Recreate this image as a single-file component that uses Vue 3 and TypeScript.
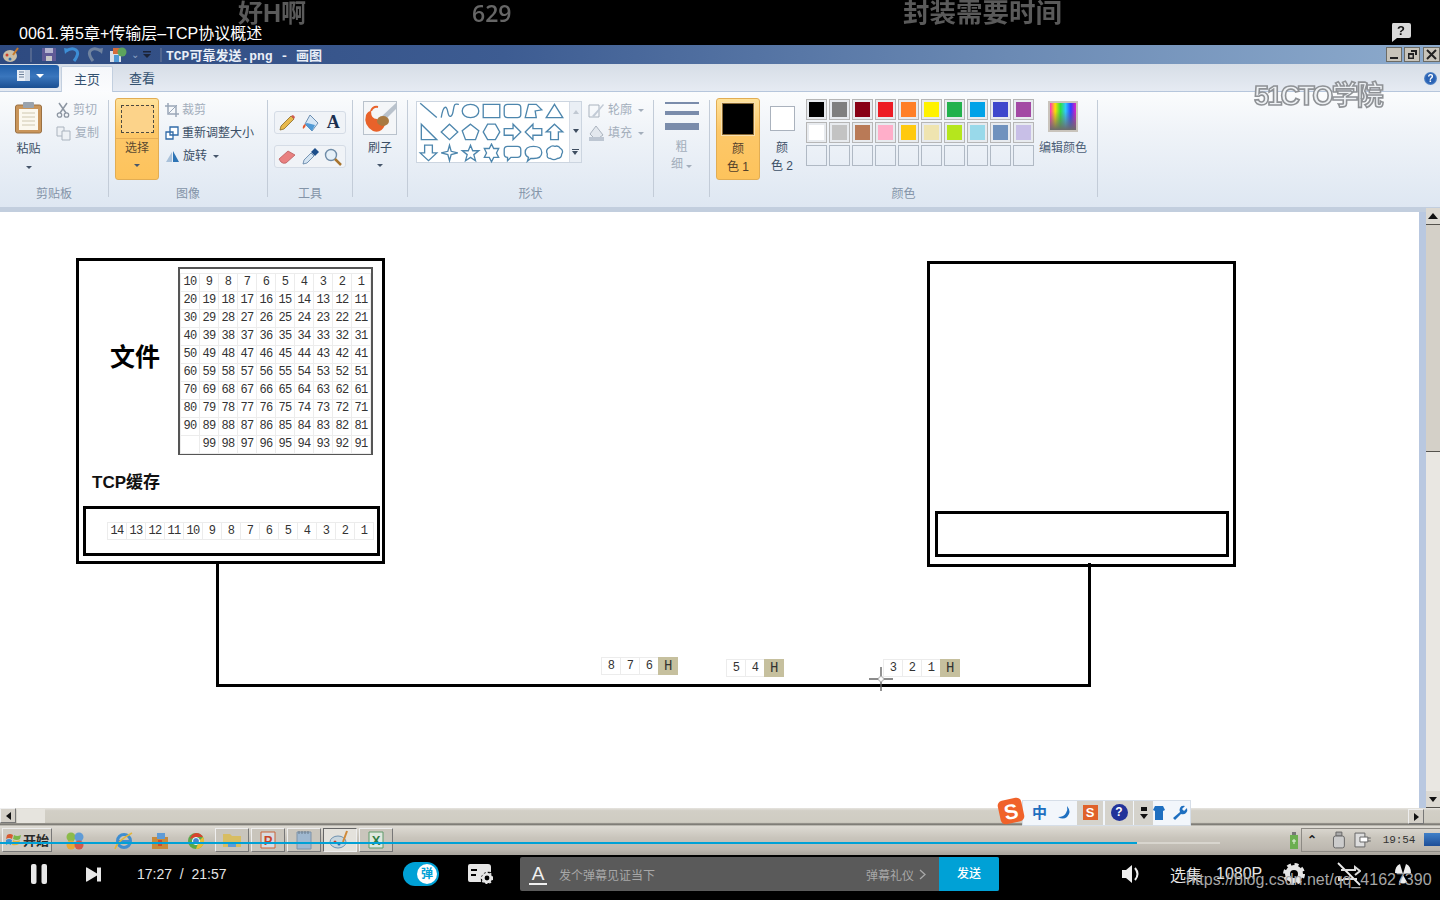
<script setup lang="ts">
const rowsOfFile: (number | string)[][] = []
for (let r = 0; r < 10; r++) {
  const row: (number | string)[] = []
  for (let c = 10; c >= 1; c--) {
    const v = r * 10 + c
    row.push(v === 100 ? '' : v)
  }
  rowsOfFile.push(row)
}
const fileCells = rowsOfFile.flat()
const bufferCells = [14, 13, 12, 11, 10, 9, 8, 7, 6, 5, 4, 3, 2, 1]

interface Packet {
  id: number
  x: number
  y: number
  nums: number[]
}
const packets: Packet[] = [
  { id: 1, x: 601, y: 445, nums: [8, 7, 6] },
  { id: 2, x: 726, y: 447, nums: [5, 4] },
  { id: 3, x: 883, y: 447, nums: [3, 2, 1] }
]

const shapes: string[] = [
  'M2 2L17 15',
  'M2 15C4 3 7 4 8 10S12 15 13 8S15 3 18 3',
  'M9.5 3C14 3 17 5.5 17 9S14 15 9.5 15S2 12.5 2 9S5 3 9.5 3Z',
  'M2 3H17V15H2Z',
  'M5 3H14Q17 3 17 6V12Q17 15 14 15H5Q2 15 2 12V6Q2 3 5 3Z',
  'M2 15L5 3H12L17 8L11 9L12 15Z',
  'M9.5 3L17 15H2Z',
  'M3 2L17 16H3Z',
  'M9.5 2L17 9L9.5 16L2 9Z',
  'M9.5 2L17 8L14 16H5L2 8Z',
  'M6 2H13L17 9L13 16H6L2 9Z',
  'M2 6H10V2L17 9L10 16V12H2Z',
  'M17 6H9V2L2 9L9 16V12H17Z',
  'M9.5 2L17 9H13V16H6V9H2Z',
  'M6 2H13V9H17L9.5 16L2 9H6Z',
  'M9.5 2L11 7.5L17 9L11 10.5L9.5 16L8 10.5L2 9L8 7.5Z',
  'M9.5 2L11.5 7H17L12.5 10.5L14 16L9.5 13L5 16L6.5 10.5L2 7H7.5Z',
  'M9.5 1L11.5 5H16L14 9L16 13H11.5L9.5 17L7.5 13H3L5 9L3 5H7.5Z',
  'M5 3H14Q17 3 17 6V10Q17 13 14 13H8L5 16V13Q2 13 2 10V6Q2 3 5 3Z',
  'M9.5 3C14 3 17 5 17 8.5S14 14 9.5 14Q8 14 7 14L4 16.500L5 13Q2 11.500 2 8.500C2 5 5 3 9.500 3Z',
  'M5 4Q7 2 10 3Q13 2 15 5Q18 7 16 10Q16 14 12 14Q9 16 6 14Q2 14 3 10Q1 6 5 4Z'
]

const colorRow1 = ['#000000', '#7f7f7f', '#880015', '#ed1c24', '#ff7f27', '#fff200', '#22b14c', '#00a2e8', '#3f48cc', '#a349a4']
const colorRow2 = ['#ffffff', '#c3c3c3', '#b97a57', '#ffaec9', '#ffc90e', '#efe4b0', '#b5e61d', '#99d9ea', '#7092be', '#c8bfe7']
const colorRow3 = Array<string>(10).fill('transparent')
const colorRows = [colorRow1, colorRow2, colorRow3]
</script>

<template>
  <div class="screen">
    <header class="top-bar">
      <span class="danmaku d1">好H啊</span>
      <span class="danmaku d2">629</span>
      <span class="danmaku d3">封装需要时间</span>
      <span class="video-title">0061.第5章+传输层–TCP协议概述</span>
      <svg class="help-bubble" width="22" height="21" viewBox="0 0 22 21">
        <path d="M3 1H19Q21 1 21 3V14Q21 16 19 16H7L2 20V3Q2 1 3 1Z" fill="#d9d9d9" />
        <text x="11" y="13" text-anchor="middle" font-size="13" font-weight="700" font-family="Liberation Sans, sans-serif" fill="#111">?</text>
      </svg>
    </header>

    <div class="title-bar">
      <svg class="qa" width="18" height="16" viewBox="0 0 18 16">
        <ellipse cx="8" cy="9" rx="7" ry="6" fill="#c9bfa8" />
        <circle cx="5" cy="8" r="1.500" fill="#d0402a" />
        <circle cx="8" cy="12" r="1.500" fill="#2d6fb0" />
        <path d="M11 8L16 1" stroke="#c77a2a" stroke-width="2" />
      </svg>
      <i class="sep"></i>
      <svg class="qa qa-save" width="16" height="15" viewBox="0 0 16 15">
        <path d="M1 1H15V14H1Z" fill="#5f5a96" />
        <path d="M4 1H12V6H4Z" fill="#b4b4d0" />
        <path d="M5 9H11V14H5Z" fill="#c8c8c8" />
      </svg>
      <svg class="qa qa-undo" width="18" height="15" viewBox="0 0 18 15">
        <path d="M3 4Q9 0 13 3T11 14" fill="none" stroke="#3d8ed6" stroke-width="3" />
        <path d="M1 1L7 2L2 7Z" fill="#3d8ed6" />
      </svg>
      <svg class="qa qa-redo" width="18" height="15" viewBox="0 0 18 15">
        <path d="M15 4Q9 0 5 3T7 14" fill="none" stroke="#70839f" stroke-width="3" />
        <path d="M17 1L11 2L16 7Z" fill="#70839f" />
      </svg>
      <svg class="qa qa-multi" width="22" height="16" viewBox="0 0 22 16">
        <path d="M1 4H12V15H1Z" fill="#d8dfe8" />
        <path d="M4 1H14V7H4Z" fill="#d66c3a" />
        <circle cx="13" cy="5" r="4.500" fill="#5da35d" />
        <path d="M5 8H10V15H5Z" fill="#4f9ad6" />
      </svg>
      <span class="qa-caret">⌄</span>
      <svg class="qa qa-more" width="10" height="8" viewBox="0 0 10 8">
        <path d="M1 0H9V1.500H1Z M1 3H9L5 7Z" fill="#1c2438" />
      </svg>
      <i class="sep sep2"></i>
      <span class="window-title">TCP可靠发送.png - 画图</span>
      <div class="win-btns">
        <span class="win-btn"><i class="win-min"></i></span>
        <span class="win-btn"><svg width="11" height="11" viewBox="0 0 11 11"><path d="M4 1H10V6H8V3H4Z M1 4H7V10H1Z M2.500 6V8.500H5.500V6Z" fill="#222" fill-rule="evenodd" /></svg></span>
        <span class="win-btn win-close"><svg width="11" height="11" viewBox="0 0 11 11"><path d="M1 1L10 10M10 1L1 10" stroke="#222" stroke-width="2" /></svg></span>
      </div>
    </div>

    <div class="tab-row">
      <div class="file-tab">
        <svg width="15" height="11" viewBox="0 0 15 11">
          <path d="M1 0H14V11H1Z" fill="#e8eef6" />
          <path d="M3 2H8M3 4.500H8M3 7H8" stroke="#6b7f99" />
          <path d="M9 0H14V11H9Z" fill="#cfdae8" />
        </svg>
        <i class="mini-caret white"></i>
      </div>
      <div class="tab active">主页</div>
      <div class="tab">查看</div>
      <span class="logo-51">51CTO学院</span>
      <span class="help-ball">?</span>
    </div>

    <div class="ribbon">
      <section class="group g-clip">
        <div class="group-body">
          <div class="big-btn paste">
            <svg width="29" height="33" viewBox="0 0 29 33">
              <rect x="1.500" y="4" width="26" height="28" rx="2" fill="#c9955a" stroke="#9a7042" />
              <rect x="5" y="8" width="19" height="21" fill="#fbf8ef" />
              <path d="M8 12H21M8 16H21M8 20H21M8 24H21" stroke="#cfc8b0" />
              <rect x="9" y="1" width="11" height="6" rx="1" fill="#9aa3ad" />
            </svg>
            <span>粘贴</span>
            <i class="mini-caret"></i>
          </div>
          <div class="small-col muted">
            <div class="small-row">
              <svg width="14" height="16" viewBox="0 0 14 16"><path d="M3 1L10 11M11 1L4 11" stroke="#8d96a2" stroke-width="1.500" /><circle cx="3.500" cy="13" r="2.200" fill="none" stroke="#8d96a2" stroke-width="1.300" /><circle cx="10.500" cy="13" r="2.200" fill="none" stroke="#8d96a2" stroke-width="1.300" /></svg>
              <span>剪切</span>
            </div>
            <div class="small-row">
              <svg width="16" height="15" viewBox="0 0 16 15"><path d="M1 1H8V10H1Z" fill="#eef1f5" stroke="#aab3be" /><path d="M6 5H14V14H6Z" fill="#eef1f5" stroke="#aab3be" /></svg>
              <span>复制</span>
            </div>
          </div>
        </div>
        <div class="group-label">剪贴板</div>
      </section>

      <section class="group g-image">
        <div class="group-body">
          <div class="orange-btn select-btn">
            <div class="select-top"><i class="dashed"></i></div>
            <span>选择</span>
            <i class="mini-caret"></i>
          </div>
          <div class="small-col">
            <div class="small-row muted">
              <svg width="14" height="14" viewBox="0 0 14 14"><path d="M3 0V11H14M0 3H11V14" fill="none" stroke="#9aa7b8" stroke-width="1.500" /><path d="M4 10L12 2" stroke="#9aa7b8" /></svg>
              <span>裁剪</span>
            </div>
            <div class="small-row">
              <svg width="14" height="14" viewBox="0 0 14 14"><path d="M5 1H13V9H5Z M1 6H8V13H1Z" fill="#fff" stroke="#2f6aa8" stroke-width="1.300" /></svg>
              <span>重新调整大小</span>
            </div>
            <div class="small-row">
              <svg width="15" height="13" viewBox="0 0 15 13"><path d="M1 12L7 2V12Z" fill="#a9c1da" /><path d="M8 1L14 12H8Z" fill="#2e74b5" /></svg>
              <span>旋转</span><i class="mini-caret inline"></i>
            </div>
          </div>
        </div>
        <div class="group-label">图像</div>
      </section>

      <section class="group g-tools">
        <div class="group-body tools-body">
          <div class="tool-strip">
            <span><svg width="20" height="20" viewBox="0 0 20 20"><path d="M3 17L4 13L14 3L17 6L7 16Z" fill="#e8b94c" stroke="#8a6a24" stroke-width=".8" /><path d="M14 3L17 6L18 4L16 2Z" fill="#d05a50" /></svg></span>
            <span><svg width="20" height="20" viewBox="0 0 20 20"><path d="M10 2L18 10L12 18L5 11Z" fill="#d6e6f5" stroke="#6d8fb2" /><path d="M5 11Q2 13 3 16Q6 14 6 11Z" fill="#e5562a" /><path d="M7 10L15 12L12 18L5 11Z" fill="#4f9ad6" /></svg></span>
            <span class="a-glyph">A</span>
          </div>
          <div class="tool-strip">
            <span><svg width="20" height="20" viewBox="0 0 20 20"><path d="M2 12L11 4L18 8L9 16Q6 17 4 15Z" fill="#e98080" stroke="#b85c5c" stroke-width=".8" /></svg></span>
            <span><svg width="20" height="20" viewBox="0 0 20 20"><path d="M3 17L4 13L11 6L14 9L7 16Z" fill="#d4e4f2" stroke="#5b7ea2" stroke-width=".8" /><path d="M11 5L15 1L19 5L15 9Z" fill="#1d4e8a" /></svg></span>
            <span><svg width="20" height="20" viewBox="0 0 20 20"><circle cx="8" cy="8" r="5.500" fill="#e6f0f8" stroke="#6f8ca8" stroke-width="1.400" /><path d="M12 12L18 18" stroke="#a8742e" stroke-width="2.500" /></svg></span>
          </div>
        </div>
        <div class="group-label">工具</div>
      </section>

      <section class="group g-brush">
        <div class="group-body column">
          <svg class="brush-icon" width="34" height="34" viewBox="0 0 34 34">
            <rect x=".5" y=".5" width="33" height="33" fill="#f4f6f8" stroke="#b9c2cc" />
            <path d="M33 2L18 16L21 20L33 8Z" fill="#b9c2cc" />
            <path d="M3 14Q0 24 10 30Q18 33 22 24L14 18Q8 18 8 10Q5 10 3 14Z" fill="#e8622a" />
            <path d="M8 10Q10 5 15 6" fill="none" stroke="#e8622a" stroke-width="2" />
            <ellipse cx="20" cy="20" rx="6" ry="5" fill="#a87a42" />
          </svg>
          <span class="brush-label">刷子</span>
          <i class="mini-caret"></i>
        </div>
        <div class="group-label">&nbsp;</div>
      </section>

      <section class="group g-shapes">
        <div class="group-body">
          <div class="gallery">
            <div class="gallery-cells">
              <svg v-for="(d, i) in shapes" :key="i" width="21" height="21" viewBox="0 0 19 19">
                <path :d="d" fill="none" stroke="#4d86ad" stroke-width="1.200" />
              </svg>
            </div>
            <div class="gallery-scroll">
              <i class="tri-up"></i>
              <i class="tri-down"></i>
              <i class="tri-more"></i>
            </div>
          </div>
          <div class="small-col muted outline-col">
            <div class="small-row">
              <svg width="17" height="17" viewBox="0 0 17 17"><path d="M1 3H11V15H1Z" fill="none" stroke="#aab3be" /><path d="M4 14L15 2L16 3L6 15Z" fill="#c2cbd6" /></svg>
              <span>轮廓</span><i class="mini-caret inline light"></i>
            </div>
            <div class="small-row">
              <svg width="17" height="17" viewBox="0 0 17 17"><path d="M8 1L15 10L8 15L2 9Z" fill="#e3e8ee" stroke="#aab3be" /><path d="M1 12H16V16H1Z" fill="#bdc6d2" /></svg>
              <span>填充</span><i class="mini-caret inline light"></i>
            </div>
          </div>
        </div>
        <div class="group-label">形状</div>
      </section>

      <section class="group g-size">
        <div class="group-body column">
          <div class="size-lines"><i class="l1"></i><i class="l2"></i><i class="l3"></i></div>
          <span class="size-label muted">粗</span>
          <span class="size-label muted">细<i class="mini-caret inline light"></i></span>
        </div>
        <div class="group-label">&nbsp;</div>
      </section>

      <section class="group g-colors">
        <div class="group-body">
          <div class="orange-btn color-btn">
            <i class="color-big"></i>
            <span>颜</span>
            <span>色 1</span>
          </div>
          <div class="color2-btn">
            <i class="color-small"></i>
            <span>颜</span>
            <span>色 2</span>
          </div>
          <div class="swatches">
            <div v-for="(row, r) in colorRows" :key="r" class="swatch-row">
              <span v-for="(c, i) in row" :key="i" class="swatch" :class="{ empty: r === 2 }"><i :style="{ background: c }"></i></span>
            </div>
          </div>
          <div class="edit-colors">
            <i class="rainbow"></i>
            <span>编辑颜色</span>
          </div>
        </div>
        <div class="group-label">颜色</div>
      </section>
      <section class="group g-rest"></section>
    </div>

    <div class="work-row">
      <main class="canvas">
        <div class="box left-box">
          <div class="file-label">文件</div>
          <div class="file-grid">
            <span v-for="(n, i) in fileCells" :key="i" class="cell">{{ n }}</span>
          </div>
          <div class="buffer-label">TCP缓存</div>
          <div class="inner-box left-inner">
            <div class="buffer-row">
              <span v-for="n in bufferCells" :key="n" class="cell buf">{{ n }}</span>
            </div>
          </div>
        </div>

        <div class="box right-box">
          <div class="inner-box right-inner"></div>
        </div>

        <div class="wire"></div>

        <div v-for="p in packets" :key="p.id" class="packet" :style="{ left: p.x + 'px', top: p.y + 'px' }">
          <span v-for="n in p.nums" :key="n" class="cell pk">{{ n }}</span>
          <span class="cell head">H</span>
        </div>

        <svg class="cursor" width="24" height="24" viewBox="0 0 24 24">
          <path d="M12 0V9M12 15V24M0 12H9M15 12H24" stroke="#666" stroke-width="1.400" />
          <circle cx="12" cy="12" r="2.500" fill="none" stroke="#aaa" />
        </svg>
      </main>
      <div class="blue-strip"></div>
      <aside class="v-scroll">
        <div class="v-btn"><i class="tri-up dark"></i></div>
        <div class="v-thumb"></div>
        <div class="v-track"></div>
        <div class="v-btn"><i class="tri-down dark"></i></div>
      </aside>
    </div>

    <div class="h-scroll">
      <div class="h-btn"><i class="tri-left"></i></div>
      <div class="h-track"></div>
      <div class="h-thumb"></div>
      <div class="h-btn end"><i class="tri-right"></i></div>
    </div>

    <div class="ime">
      <svg class="ime-logo" width="30" height="30" viewBox="0 0 30 30">
        <rect x="3" y="3" width="24" height="24" rx="5" transform="rotate(-12 15 15)" fill="#f0622a" />
        <text x="15" y="23" text-anchor="middle" font-size="21" font-weight="700" font-family="Liberation Sans, sans-serif" fill="#fff" transform="rotate(-12 15 15)">S</text>
      </svg>
      <div class="ime-bar">
        <span class="ime-zh">中</span>
        <svg class="ime-moon" width="16" height="16" viewBox="0 0 16 16"><path d="M10 1Q15 7 10 12Q6 15 1 12Q7 12 9 8Q11 5 10 1Z" fill="#1e6fc0" /></svg>
        <span class="ime-cell"><b class="ime-s">S</b></span>
        <span class="ime-cell wide"><b class="ime-q">?</b></span>
        <span class="ime-grip"><i class="dots"></i><i class="tri-down dark"></i></span>
        <svg width="12" height="16" viewBox="0 0 12 16"><path d="M2 1H10L12 5L10 6V15H2V6L0 5Z" fill="#1e6fc0" /></svg>
        <svg class="ime-wrench" width="16" height="16" viewBox="0 0 16 16"><path d="M15 3L12 6L10 4L13 1Q9 0 8 3Q7 5 8 7L1 13L3 15L9 9Q12 10 14 8Q16 6 15 3Z" fill="#1e6fc0" /></svg>
      </div>
    </div>

    <div class="taskbar">
      <div class="start-btn">
        <svg width="15" height="15" viewBox="0 0 15 15">
          <path d="M1 3Q4 1 7 3L6 7Q3 5 0 7Z" fill="#d85a30" />
          <path d="M8 3Q11 5 15 3L14 7Q11 9 7 7Z" fill="#7ab648" />
          <path d="M0 8Q3 6 6 8L5 13Q2 11 0 13Z" fill="#3f8ed0" />
          <path d="M7 8Q10 10 14 8L13 12Q10 14 6 13Z" fill="#e2b63c" />
        </svg>
        <span>开始</span>
      </div>
      <div class="task-quick">
        <svg width="20" height="20" viewBox="0 0 20 20"><circle cx="6" cy="6" r="4.500" fill="#8cbb4a" /><circle cx="14" cy="6" r="4.500" fill="#5f9bd6" /><circle cx="6" cy="14" r="4.500" fill="#e8a83a" /><circle cx="14" cy="14" r="4.500" fill="#d45a4a" /></svg>
        <svg class="tq-ie" width="20" height="20" viewBox="0 0 20 20"><circle cx="10" cy="10" r="6.500" fill="none" stroke="#3f8ed0" stroke-width="3" /><path d="M4 10H16" stroke="#3f8ed0" stroke-width="2" /><path d="M1 18Q3 10 18 2" fill="none" stroke="#e2b63c" stroke-width="1.500" /></svg>
        <svg class="tq-box" width="18" height="18" viewBox="0 0 18 18"><path d="M1 5H17V17H1Z" fill="#c88a3a" /><path d="M6 1H14V7H6Z" fill="#5f9bd6" /><path d="M7 8H11V14H7Z" fill="#d04a2a" /></svg>
        <svg class="tq-chrome" width="18" height="18" viewBox="0 0 18 18"><circle cx="9" cy="9" r="8" fill="#5aa84a" /><path d="M9 1A8 8 0 0 1 16 5H9L3 7A8 8 0 0 1 9 1Z" fill="#d8432e" /><path d="M16 5A8 8 0 0 1 9 17L12 9Z" fill="#e8bf3a" /><circle cx="9" cy="9" r="3.500" fill="#4a86d0" stroke="#fff" /></svg>
      </div>
      <div class="task-items">
        <span class="task-item"><svg width="20" height="18" viewBox="0 0 20 18"><path d="M1 3H8L10 5H19V16H1Z" fill="#d8bd62" /><path d="M6 11H14V16H6Z" fill="#5f9bd6" /></svg></span>
        <span class="task-item"><svg width="18" height="18" viewBox="0 0 18 18"><path d="M2 1H16V17H2Z" fill="#d8dde2" stroke="#c9653a" /><text x="9" y="14" text-anchor="middle" font-size="13" font-weight="700" font-family="Liberation Sans, sans-serif" fill="#c9452a">P</text></svg></span>
        <span class="task-item"><svg width="18" height="20" viewBox="0 0 18 20"><path d="M2 2H16V19H2Z" fill="#9fb8d0" stroke="#7e93a8" /><path d="M4 1V4M7 1V4M10 1V4M13 1V4" stroke="#6a7a8a" /></svg></span>
        <span class="task-item current"><svg width="22" height="20" viewBox="0 0 22 20"><ellipse cx="9" cy="12" rx="8" ry="6" fill="#c8d6de" stroke="#6f92b0" /><circle cx="6" cy="12" r="1.500" fill="#d0402a" /><circle cx="10" cy="14" r="1.500" fill="#2d6fb0" /><path d="M14 12L18 1" stroke="#d08a3a" stroke-width="2" /></svg></span>
        <span class="task-item"><svg width="18" height="18" viewBox="0 0 18 18"><path d="M2 1H16V17H2Z" fill="#dfe8df" stroke="#5f9a6a" /><text x="9" y="14" text-anchor="middle" font-size="13" font-weight="700" font-family="Liberation Sans, sans-serif" fill="#2e7d44">X</text></svg></span>
      </div>
      <div class="tray">
        <svg class="tray-batt" width="10" height="18" viewBox="0 0 10 18"><path d="M1 3H9V17H1Z" fill="#6cae50" /><path d="M3 0H7V3H3Z" fill="#777" /><path d="M3 9H7M5 7V12" stroke="#e6f4e0" /></svg>
        <div class="tray-box">
          <span class="tray-up">⌃</span>
          <svg class="tray-usb" width="14" height="18" viewBox="0 0 14 18"><path d="M4 1H10V5H4Z" fill="#aaa" stroke="#666" /><rect x="1.500" y="5" width="11" height="12" rx="2" fill="#ccc" stroke="#666" /></svg>
          <svg class="tray-plug" width="18" height="18" viewBox="0 0 18 18"><path d="M1 2H11V16H1Z" fill="#ddd" stroke="#666" /><path d="M6 6H14V11H6Z" fill="#fff" stroke="#666" /><path d="M14 7H17M14 10H17" stroke="#666" /></svg>
          <span class="clock">19:54</span>
          <i class="desk"></i>
        </div>
      </div>
    </div>

    <div class="player">
      <div class="progress"><i class="buffered"></i><i class="played"></i></div>
      <svg class="p-pause" width="16" height="20" viewBox="0 0 16 20"><rect x="0" y="0" width="5.500" height="20" rx="2" fill="#e8e8e8" /><rect x="10.500" y="0" width="5.500" height="20" rx="2" fill="#e8e8e8" /></svg>
      <svg class="p-next" width="17" height="15" viewBox="0 0 17 15"><path d="M1 1Q1 0 2 .5L12 6.500V.5H16V14.500H12V8.500L2 14.500Q1 15 1 14Z" fill="#e8e8e8" /></svg>
      <span class="p-time">17:27&nbsp; /&nbsp; 21:57</span>
      <div class="p-toggle"><b>弹</b></div>
      <svg class="p-setting" width="25" height="20" viewBox="0 0 25 20">
        <path d="M2 0H20Q23 0 23 3V8Q17 7 14 11Q12 14 13 18H2Q0 18 0 16V2Q0 0 2 0Z" fill="#e6e6e6" />
        <path d="M3 6H9M3 11H8" stroke="#000" stroke-width="1.800" />
        <circle cx="19" cy="14" r="3.800" fill="none" stroke="#e6e6e6" stroke-width="2.800" />
        <circle cx="19" cy="14" r="5.500" fill="none" stroke="#e6e6e6" stroke-width="1.500" stroke-dasharray="2 2" />
      </svg>
      <div class="p-input">
        <span class="p-a">A</span>
        <span class="p-hint">发个弹幕见证当下</span>
        <span class="p-gift">弹幕礼仪</span>
        <svg width="7" height="11" viewBox="0 0 7 11"><path d="M1 1L6 5.500L1 10" fill="none" stroke="#a8a8a8" stroke-width="1.300" /></svg>
        <span class="p-send">发送</span>
      </div>
      <svg class="p-vol" width="22" height="20" viewBox="0 0 22 20"><path d="M1 6H5L11 1V19L5 14H1Z" fill="#eee" /><path d="M14 4Q19 10 14 16" fill="none" stroke="#eee" stroke-width="2" /></svg>
      <span class="p-text p-sel">选集</span>
      <span class="p-text p-res">1080P</span>
      <svg class="p-gear" width="22" height="22" viewBox="0 0 22 22">
        <circle cx="11" cy="11" r="6.500" fill="none" stroke="#e6e6e6" stroke-width="5" />
        <circle cx="11" cy="11" r="9.500" fill="none" stroke="#e6e6e6" stroke-width="3" stroke-dasharray="4 3.500" />
      </svg>
      <svg class="p-loop" width="24" height="24" viewBox="0 0 24 24">
        <path d="M1 1L23 23" stroke="#eee" stroke-width="1.800" />
        <path d="M4 8H18V5L23 9L18 13" fill="none" stroke="#ddd" stroke-width="2" />
        <path d="M20 17H6" stroke="#ddd" stroke-width="2" />
        <path d="M2 14V18H6" fill="none" stroke="#ddd" stroke-width="2" />
      </svg>
      <svg class="p-nuke" width="24" height="24" viewBox="0 0 24 24">
        <path d="M12 12L4 11Q4 4 9 2Z M12 12L20 11Q20 4 15 2Z M12 13L8 20Q12 23 16 20Z" fill="#eee" />
      </svg>
      <span class="watermark">https://blog.csdn.net/qq_41627390</span>
    </div>
  </div>
</template>

<style>
html,
body {
  margin: 0;
  background: #000;
}
</style>

<style scoped>
.screen {
  position: relative;
  width: 1440px;
  height: 900px;
  overflow: hidden;
  display: flex;
  flex-direction: column;
  font-family: 'Liberation Sans', 'Noto Sans CJK SC', sans-serif;
  filter: blur(0.45px);
}

i {
  display: block;
  font-style: normal;
}

/* top band of the video */
.top-bar {
  position: relative;
  height: 45px;
  flex: none;
  background: #000;
  box-sizing: border-box;
  padding: 24px 0 0 19px;
}
.video-title {
  display: block;
  color: #fff;
  font-size: 16px;
  line-height: 20px;
}
.danmaku {
  position: absolute;
  top: 0;
  color: #5a5a5a;
  font-size: 24px;
  line-height: 26px;
  font-weight: 700;
}
.d1 { left: 238px; font-size: 25px; }
.d2 { left: 472px; font-family: 'Open Sans', sans-serif; font-size: 23px; font-weight: 600; color: #666; }
.d3 { left: 903px; font-size: 26.5px; }
.help-bubble {
  position: absolute;
  left: 1390px;
  top: 22px;
}

/* title bar */
.title-bar {
  height: 19px;
  flex: none;
  display: flex;
  align-items: center;
  background: linear-gradient(90deg, #2e4a80 0%, #3d5c92 35%, #6b8ab4 70%, #8dabcd 100%);
  padding-left: 2px;
  box-sizing: border-box;
}
.qa { flex: none; }
.sep {
  width: 2px;
  height: 14px;
  margin: 0 0 0 10px;
  background: #51668f;
}
.qa-save { margin-left: 9px; }
.qa-undo { margin-left: 6px; }
.qa-redo { margin-left: 5px; }
.qa-multi { margin-left: 5px; }
.qa-caret {
  color: #8fa3c4;
  font-size: 10px;
  line-height: 10px;
}
.qa-more { margin-left: 3px; }
.sep2 { margin-left: 8px; }
.window-title {
  margin-left: 4px;
  color: #e9eef7;
  font-family: 'Liberation Mono', 'Noto Sans CJK SC', monospace;
  font-size: 13px;
  font-weight: 700;
  white-space: nowrap;
}
.win-btns {
  margin-left: auto;
  display: flex;
  gap: 2px;
}
.win-btn {
  width: 16px;
  height: 15px;
  background: #c8c4ba;
  border: 1px solid #6c6c66;
  box-sizing: border-box;
  display: flex;
  align-items: center;
  justify-content: center;
}
.win-close { width: 17px; margin-left: 1px; }
.win-min {
  width: 8px;
  height: 2px;
  background: #222;
  margin-top: 7px;
}

/* tabs */
.tab-row {
  position: relative;
  height: 28px;
  flex: none;
  display: flex;
  align-items: flex-end;
  background: linear-gradient(#d6dde6, #e6ebf3);
  border-bottom: 1px solid #b6c6dc;
  box-sizing: border-box;
}
.file-tab {
  width: 59px;
  height: 23px;
  margin-bottom: 3px;
  border-radius: 0 3px 3px 0;
  background: linear-gradient(#1e5da8, #3a76bd 50%, #1a4f92);
  display: flex;
  align-items: center;
  justify-content: center;
  gap: 5px;
  padding-bottom: 2px;
  box-sizing: border-box;
}
.tab {
  width: 52px;
  height: 24px;
  text-align: center;
  font-size: 13px;
  line-height: 23px;
  color: #33516f;
  box-sizing: border-box;
}
.tab.active {
  height: 26px;
  margin-bottom: -1px;
  background: linear-gradient(#f5f7fa, #fbfcfe);
  border: 1px solid #c2cfdf;
  border-bottom: 0;
  border-radius: 2px 2px 0 0;
  margin-left: 2px;
  line-height: 25px;
}
.tab:not(.active) { margin-left: 3px; }
.logo-51 {
  position: absolute;
  left: 1254px;
  top: 15px;
  font-size: 27px;
  line-height: 34px;
  font-weight: 700;
  color: #eef1f4;
  -webkit-text-stroke: 1.6px #8f9296;
  letter-spacing: -1.8px;
  white-space: nowrap;
}
.help-ball {
  position: absolute;
  left: 1424px;
  top: 8px;
  width: 13px;
  height: 13px;
  border-radius: 50%;
  background: radial-gradient(#2a62b4 50%, #9fc2e6);
  color: #fff;
  font-size: 10px;
  font-weight: 700;
  line-height: 13px;
  text-align: center;
}

/* ribbon */
.ribbon {
  height: 115px;
  flex: none;
  display: flex;
  background: linear-gradient(#fbfcfd 0%, #eff3f8 35%, #dee7f2 100%);
  font-size: 12px;
  color: #3b4f66;
}
.group {
  flex: none;
  box-sizing: border-box;
  border-right: 1px solid #c3ccd8;
  margin-top: 8px;
  height: 97px;
  display: flex;
  flex-direction: column;
}
.group-body {
  height: 82px;
  margin-top: -2px;
  display: flex;
}
.group-body.column {
  flex-direction: column;
  align-items: center;
}
.group-label {
  margin-top: auto;
  margin-bottom: -6px;
  text-align: center;
  font-size: 12px;
  line-height: 17px;
  color: #8494a8;
}
.g-clip { width: 109px; }
.g-image { width: 159px; }
.g-tools { width: 85px; }
.g-brush { width: 55px; }
.g-shapes { width: 246px; }
.g-size { width: 56px; }
.g-colors { width: 388px; }
.g-rest { border-right: 0; flex: 1; }

.big-btn.paste {
  width: 29px;
  margin-left: 14px;
  display: flex;
  flex-direction: column;
  align-items: center;
  padding-top: 3px;
}
.paste span {
  margin-top: 7px;
  line-height: 17px;
}
.paste .mini-caret { margin-top: 8px; }
.small-col {
  display: flex;
  flex-direction: column;
  gap: 5px;
  margin-top: 2px;
}
.g-clip .small-col {
  margin-left: 13px;
  margin-top: 3px;
}
.small-row {
  height: 18px;
  display: flex;
  align-items: center;
  gap: 3px;
  white-space: nowrap;
  line-height: 18px;
}
.muted { color: #a3aebb; }
.mini-caret {
  width: 0;
  height: 0;
  border: 3px solid transparent;
  border-top: 3px solid #46566b;
  border-bottom: 0;
}
.mini-caret.white { border-top-color: #fff; border-left-width: 4px; border-right-width: 4px; border-top-width: 4px; }
.mini-caret.inline { margin-left: 3px; display: inline-block; }
.mini-caret.light { border-top-color: #a3aebb; }

.orange-btn {
  box-sizing: border-box;
  background: linear-gradient(#ffe29a, #fdc869 40%, #fdc35c);
  border: 1px solid #e2ad53;
  border-radius: 3px;
}
.select-btn {
  width: 44px;
  height: 82px;
  margin-left: 6px;
  display: flex;
  flex-direction: column;
  align-items: center;
  color: #5a4a30;
}
.select-top {
  width: 100%;
  height: 40px;
  border-bottom: 1px solid #e6ae58;
  display: flex;
  justify-content: center;
  align-items: center;
  box-sizing: border-box;
}
.dashed {
  width: 31px;
  height: 26px;
  border: 1px dashed #4c4a40;
  background: #fcd38a;
}
.select-btn span { line-height: 18px; }
.select-btn .mini-caret { margin-top: 7px; }
.g-image .small-col { margin-left: 6px; margin-top: 3px; }

.tools-body {
  flex-direction: column;
  gap: 11px;
  padding: 13px 0 0 6px;
  box-sizing: border-box;
}
.tool-strip {
  width: 72px;
  height: 23px;
  display: flex;
  border: 1px solid #d5dce6;
  border-radius: 3px;
  background: #f0f3f7;
  box-sizing: border-box;
}
.tool-strip span {
  flex: 1;
  display: flex;
  align-items: center;
  justify-content: center;
}
.a-glyph {
  font-family: 'Liberation Serif', serif;
  font-size: 18px;
  font-weight: 700;
  color: #1b2f4f;
}
.brush-icon { margin-top: 3px; }
.brush-label { margin-top: 4px; line-height: 18px; }
.g-brush .mini-caret { margin-top: 7px; }

.gallery {
  margin: 3px 0 0 8px;
  width: 166px;
  height: 62px;
  display: flex;
  border: 1px solid #ccd5e0;
  box-sizing: border-box;
  background: #fff;
}
.gallery-cells {
  width: 152px;
  height: 63px;
  margin-top: -1px;
  display: flex;
  flex-wrap: wrap;
  align-content: flex-start;
  padding-left: 1px;
  box-sizing: border-box;
}
.gallery-scroll {
  flex: 1;
  background: #eaeff5;
  border-left: 1px solid #d5dce6;
  display: flex;
  flex-direction: column;
  align-items: center;
  justify-content: space-around;
}
.tri-up,
.tri-down {
  width: 0;
  height: 0;
  border: 3px solid transparent;
}
.tri-up { border-bottom: 4px solid #c0c8d2; border-top: 0; }
.tri-down { border-top: 4px solid #3e4d60; border-bottom: 0; }
.tri-up.dark { border-bottom-color: #111; border-left-width: 5px; border-right-width: 5px; border-bottom-width: 6px; }
.tri-down.dark { border-top-color: #111; border-left-width: 4px; border-right-width: 4px; border-top-width: 5px; }
.tri-more {
  width: 7px;
  height: 4px;
  border-top: 1px solid #3e4d60;
  position: relative;
}
.tri-more::after {
  content: '';
  position: absolute;
  left: 0;
  top: 1px;
  border: 3.5px solid transparent;
  border-top: 4px solid #3e4d60;
  border-bottom: 0;
}
.outline-col { margin: 3px 0 0 6px; gap: 5px; }

.size-lines {
  margin-top: 4px;
  width: 34px;
  display: flex;
  flex-direction: column;
}
.size-lines i { background: #7a8cab; }
.size-lines .l1 { height: 2px; margin-bottom: 7px; }
.size-lines .l2 { height: 4px; margin-bottom: 8px; }
.size-lines .l3 { height: 7px; }
.size-label { line-height: 17px; }
.size-lines + .size-label { margin-top: 9px; }

.color-btn {
  width: 44px;
  height: 82px;
  margin-left: 6px;
  display: flex;
  flex-direction: column;
  align-items: center;
  color: #53402a;
  line-height: 18px;
}
.color-big {
  width: 32px;
  height: 32px;
  margin: 4px 0 5px;
  background: #000;
  border: 1px solid #8a6a34;
  box-sizing: border-box;
  outline: 1px solid #f8e0b0;
}
.color2-btn {
  width: 44px;
  height: 82px;
  display: flex;
  flex-direction: column;
  align-items: center;
  line-height: 18px;
}
.color-small {
  width: 25px;
  height: 25px;
  margin: 8px 0 8px;
  background: #fff;
  border: 1px solid #aab2bd;
  box-sizing: border-box;
}
.swatches {
  margin: 1px 0 0 2px;
  display: flex;
  flex-direction: column;
  gap: 2px;
}
.swatch-row {
  display: flex;
  gap: 2px;
}
.swatch {
  width: 21px;
  height: 21px;
  box-sizing: border-box;
  border: 1px solid #b6b6b6;
  background: #e8ebef;
  padding: 2px;
}
.swatch i { width: 100%; height: 100%; }
.swatch.empty { border-color: #b0b9c4; background: transparent; }
.edit-colors {
  margin-left: 2px;
  display: flex;
  flex-direction: column;
  align-items: center;
  width: 54px;
  white-space: nowrap;
  color: #4b5e76;
}
.rainbow {
  width: 30px;
  height: 31px;
  margin: 3px 0 6px;
  border: 2px solid #c9c4bc;
  box-sizing: border-box;
  background: linear-gradient(transparent 30%, #6b6b6b 100%), linear-gradient(90deg, #ff30c0, #ffe000, #30e040, #30c8ff, #3040ff, #e020c0);
}

/* work area */
.work-row {
  height: 601px;
  flex: none;
  display: flex;
  background: #fff;
  border-top: 5px solid #c2cede;
  box-sizing: border-box;
}
.canvas {
  position: relative;
  width: 1419px;
  flex: none;
  background: #fff;
  height: 596px;
}
.blue-strip {
  width: 7px;
  background: #b9c8e0;
  flex: none;
}
.v-scroll {
  flex: 1;
  display: flex;
  flex-direction: column;
  margin-top: -4px;
  background: #e6e3dd;
}
.v-btn {
  height: 16px;
  flex: none;
  background: #dcd9d2;
  border-bottom: 1px solid #55534e;
  display: flex;
  align-items: center;
  justify-content: center;
}
.v-thumb {
  height: 226px;
  flex: none;
  background: #d4d0c8;
  border-bottom: 1px solid #55534e;
}
.v-track { flex: 1; background: #e9e7e2; }

.box {
  position: absolute;
  box-sizing: border-box;
  border: 3px solid #000;
  background: #fff;
}
.left-box {
  left: 76px;
  top: 46px;
  width: 309px;
  height: 306px;
}
.right-box {
  left: 927px;
  top: 49px;
  width: 309px;
  height: 306px;
}
.inner-box {
  position: absolute;
  box-sizing: border-box;
  border: 3px solid #000;
  background: #fff;
}
.left-inner {
  left: 4px;
  top: 245px;
  width: 297px;
  height: 50px;
}
.right-inner {
  left: 5px;
  top: 247px;
  width: 294px;
  height: 46px;
}
.file-label {
  position: absolute;
  left: 31px;
  top: 79px;
  font-size: 25px;
  line-height: 34px;
  font-weight: 700;
  color: #000;
}
.buffer-label {
  position: absolute;
  left: 13px;
  top: 210px;
  font-size: 17px;
  line-height: 24px;
  font-weight: 700;
  color: #111;
}
.file-grid {
  position: absolute;
  left: 99px;
  top: 6px;
  width: 195px;
  height: 188px;
  box-sizing: border-box;
  border: 2px solid #555;
  padding: 4px 0 0 0;
  display: grid;
  grid-template-columns: repeat(10, 19px);
  grid-auto-rows: 18px;
}
.cell {
  box-sizing: border-box;
  border: 1px solid #ececec;
  margin: 0 -1px -1px 0;
  font-family: 'Liberation Mono', monospace;
  font-size: 12px;
  letter-spacing: -0.6px;
  color: #333;
  text-align: center;
  line-height: 16px;
  background: #fff;
}
.buffer-row {
  position: absolute;
  left: 21px;
  top: 13px;
  display: flex;
}
.cell.buf {
  width: 20px;
  height: 18px;
  flex: none;
}
.wire {
  position: absolute;
  left: 216px;
  top: 351px;
  width: 875px;
  height: 124px;
  border: 3px solid #000;
  border-top: 0;
  box-sizing: border-box;
  background: transparent;
}
.packet {
  position: absolute;
  display: flex;
}
.cell.pk {
  width: 20px;
  height: 18px;
  flex: none;
}
.cell.head {
  width: 20px;
  height: 18px;
  flex: none;
  background: #c6c09e;
  border-color: #c6c09e;
  margin-right: 0;
  font-family: 'Liberation Mono', monospace;
  font-size: 14px;
}
.cursor {
  position: absolute;
  left: 869px;
  top: 455px;
}

/* horizontal scrollbar */
.h-scroll {
  position: relative;
  height: 18px;
  flex: none;
  display: flex;
  background: linear-gradient(#e6e4df 0, #d2cfc6 15%, #cfccc2 80%, #6e6c66 90%, #d8d5cd 100%);
}
.h-btn {
  width: 16px;
  height: 15px;
  flex: none;
  background: #d4d0c8;
  border: 1px solid #777;
  border-left-color: #eee;
  border-top-color: #eee;
  box-sizing: border-box;
  display: flex;
  align-items: center;
  justify-content: center;
}
.h-btn.end { position: absolute; right: 16px; top: 1px; }
.h-track { flex: 1; }
.h-thumb {
  position: absolute;
  left: 17px;
  top: 1px;
  width: 28px;
  height: 14px;
  background: #e6e4de;
}
.tri-left,
.tri-right {
  width: 0;
  height: 0;
  border: 4px solid transparent;
}
.tri-left { border-right: 5px solid #111; border-left: 0; }
.tri-right { border-left: 5px solid #111; border-right: 0; }

/* input method bar */
.ime {
  position: absolute;
  left: 996px;
  top: 796px;
  display: flex;
  align-items: center;
}
.ime-logo { position: relative; z-index: 1; }
.ime-bar {
  margin-left: -4px;
  width: 169px;
  height: 26px;
  margin-top: 3px;
  display: flex;
  align-items: center;
  padding-left: 9px;
  box-sizing: border-box;
  background: #f2f6fb;
  border: 1px solid #d6dee8;
}
.ime-zh {
  color: #1e6fc0;
  font-size: 15px;
  font-weight: 700;
  line-height: 20px;
}
.ime-moon { margin-left: 10px; }
.ime-cell {
  width: 26px;
  height: 24px;
  background: #d5d3cc;
  display: flex;
  align-items: center;
  justify-content: center;
  margin-left: 4px;
}
.ime-cell.wide { width: 28px; margin-left: 2px; }
.ime-s {
  width: 15px;
  height: 15px;
  background: #e0622a;
  color: #fff;
  font-size: 13px;
  line-height: 15px;
  text-align: center;
}
.ime-q {
  width: 17px;
  height: 17px;
  border-radius: 50%;
  background: #22339a;
  color: #fff;
  font-size: 12px;
  line-height: 17px;
  text-align: center;
}
.ime-grip {
  width: 19px;
  height: 24px;
  background: #d5d3cc;
  display: flex;
  flex-direction: column;
  align-items: center;
  justify-content: center;
  gap: 3px;
  margin-left: 1px;
}
.dots { width: 6px; height: 4px; border-top: 2px solid #111; border-bottom: 2px solid #111; box-sizing: border-box; }
.ime-wrench { margin-left: 7px; }

/* taskbar */
.taskbar {
  position: relative;
  height: 29px;
  flex: none;
  display: flex;
  align-items: center;
  background: linear-gradient(#dedbd4 0, #c9c5bc 40%, #bdb8b0 80%, #a8a49c 100%);
  padding-left: 2px;
  box-sizing: border-box;
}
.start-btn {
  width: 50px;
  height: 24px;
  margin-top: -2px;
  flex: none;
  display: flex;
  align-items: center;
  gap: 2px;
  padding-left: 3px;
  box-sizing: border-box;
  background: #cfcbc2;
  border: 1px solid #777;
  border-left-color: #eee;
  border-top-color: #eee;
  font-size: 13px;
  font-weight: 700;
  color: #2a2a28;
  white-space: nowrap;
}
.task-quick {
  margin-left: 13px;
  display: flex;
  align-items: center;
}
.tq-ie { margin-left: 29px; }
.tq-box { margin-left: 17px; }
.tq-chrome { margin-left: 18px; }
.task-items {
  margin-left: 10px;
  display: flex;
  gap: 2px;
}
.task-item {
  width: 34px;
  height: 24px;
  margin-top: -2px;
  box-sizing: border-box;
  background: #c9c5bc;
  border: 1px solid #777;
  border-left-color: #eee;
  border-top-color: #eee;
  display: flex;
  align-items: center;
  justify-content: center;
  overflow: hidden;
}
.task-item.current { background: #e4e2dc; border-color: #666; border-right-color: #eee; border-bottom-color: #eee; }
.tray {
  margin-left: auto;
  display: flex;
  align-items: center;
  gap: 2px;
}
.tray-box {
  width: 139px;
  height: 24px;
  box-sizing: border-box;
  border: 1px solid #8d8a84;
  border-right: 0;
  display: flex;
  align-items: center;
  padding-left: 5px;
  margin-top: -2px;
}
.tray-up { font-size: 12px; line-height: 12px; font-weight: 700; color: #222; }
.tray-usb { margin-left: 15px; }
.tray-plug { margin-left: 8px; }
.clock {
  margin-left: 11px;
  font-family: 'Liberation Mono', monospace;
  font-size: 11px;
  letter-spacing: -0.1px;
  color: #333;
}
.desk {
  width: 16px;
  height: 13px;
  background: linear-gradient(#3f80c8, #1e4e98);
  margin-left: 9px;
}

/* player bar */
.player {
  position: relative;
  height: 45px;
  flex: none;
  background: #000;
  display: flex;
  align-items: center;
  padding-bottom: 7px;
  box-sizing: border-box;
}
.progress {
  position: absolute;
  left: 0;
  top: -13px;
  width: 1220px;
  height: 3px;
}
.progress i {
  position: absolute;
  left: 0;
  top: 0;
  height: 2px;
}
.buffered { width: 1220px; background: #d8d5ce; }
.played { width: 1137px; background: #00a1d6; }
.p-pause { margin-left: 31px; flex: none; }
.p-next { margin-left: 38px; flex: none; }
.p-time {
  margin-left: 35px;
  width: 100px;
  flex: none;
  color: #e6e6e6;
  font-size: 14px;
  white-space: nowrap;
}
.p-toggle {
  margin-left: 166px;
  width: 36px;
  height: 24px;
  flex: none;
  border-radius: 12px;
  background: #00a1d6;
  display: flex;
  align-items: center;
  justify-content: flex-end;
  padding-right: 2px;
  box-sizing: border-box;
}
.p-toggle b {
  width: 20px;
  height: 20px;
  border-radius: 50%;
  background: #fff;
  color: #00a1d6;
  font-size: 12px;
  line-height: 20px;
  text-align: center;
}
.p-setting { margin-left: 29px; flex: none; }
.p-input {
  margin-left: 27px;
  width: 479px;
  height: 34px;
  flex: none;
  display: flex;
  align-items: center;
  background: #5a5a5a;
  border-radius: 2px;
  overflow: hidden;
}
.p-a {
  margin-left: 9px;
  width: 18px;
  color: #f0f0f0;
  font-size: 19px;
  line-height: 19px;
  text-align: center;
  border-bottom: 2px solid #f0f0f0;
}
.p-hint {
  margin-left: 12px;
  color: #a8a8a8;
  font-size: 12px;
}
.p-gift {
  margin-left: auto;
  margin-right: 5px;
  color: #a8a8a8;
  font-size: 12px;
}
.p-send {
  margin-left: 13px;
  width: 60px;
  height: 34px;
  background: #00a1d6;
  color: #fff;
  font-size: 12px;
  font-weight: 500;
  line-height: 34px;
  text-align: center;
}
.p-vol { margin-left: 122px; flex: none; }
.p-text {
  color: #e6e6e6;
  font-size: 16px;
  white-space: nowrap;
  flex: none;
}
.p-sel { margin-left: 27px; }
.p-res { margin-left: 14px; }
.p-gear { margin-left: 21px; flex: none; }
.p-loop { margin-left: 32px; flex: none; }
.p-nuke { margin-left: 30px; flex: none; }
.watermark {
  position: absolute;
  left: 1186px;
  top: 13px;
  color: #a6a6a6;
  font-size: 16px;
  line-height: 24px;
  white-space: nowrap;
}
</style>
